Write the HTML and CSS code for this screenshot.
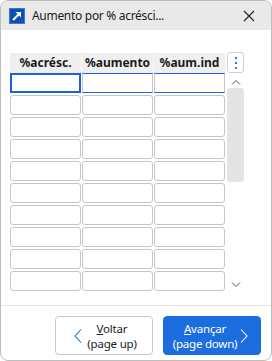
FILE: index.html
```html
<!DOCTYPE html>
<html lang="pt">

<head>
	<meta name="viewport" content="width=device-width, initial-scale=1">
	<title>Aumento por % acréscimo</title>
	<link rel="stylesheet" href="styles.css">
</head>

<body>
	<div class="window">
		<div class="titlebar">
			<svg class="app-icon" width="16" height="16" viewBox="0 0 16 16">
				<rect x="0.5" y="0.5" width="15" height="15" fill="#0f4fb0" stroke="#3b78d0" />
				<path d="M4 12 L11 5" stroke="#fff" stroke-width="2" />
				<path d="M6.5 4 L12 4 L12 9.5 Z" fill="#fff" />
			</svg>
			<span class="title">Aumento por % acrésci...</span>
			<svg class="close" width="12" height="12" viewBox="0 0 12 12">
				<path d="M1 1 L11 11 M11 1 L1 11" stroke="#222" stroke-width="1.1" />
			</svg>
		</div>

		<div class="content">
			<div class="grid-area">
				<div class="table">
					<div class="head">
						<div class="th">%acrésc.</div>
						<div class="th">%aumento</div>
						<div class="th">%aum.ind</div>
					</div>
					<div class="rows" id="rows"></div>
				</div>
				<div class="side">
					<div class="menu-btn">
						<span></span><span></span><span></span>
					</div>
					<svg class="arrow up" width="10" height="6" viewBox="0 0 10 6">
						<path d="M1 5.5 L5 1.5 L9 5.5" fill="none" stroke="#555" stroke-width="1" />
					</svg>
					<div class="thumb"></div>
					<div class="track-rest"></div>
					<svg class="arrow" width="10" height="6" viewBox="0 0 10 6">
						<path d="M1 0.5 L5 4.5 L9 0.5" fill="none" stroke="#555" stroke-width="1" />
					</svg>
				</div>
			</div>
		</div>

		<div class="footer">
			<button class="nav back">
				<svg width="8" height="14" viewBox="0 0 8 14">
					<path d="M7 0.5 L1 7 L7 13.5" fill="none" stroke="#1a6fdb" stroke-width="1.1" />
				</svg>
				<span class="label"><u>V</u>oltar<br>(page up)</span>
			</button>
			<button class="nav next">
				<span class="label"><u>A</u>vançar<br>(page down)</span>
				<svg width="8" height="14" viewBox="0 0 8 14">
					<path d="M1 0.5 L7 7 L1 13.5" fill="none" stroke="#fff" stroke-width="1.1" />
				</svg>
			</button>
		</div>
	</div>

	<script>
		const rows = document.getElementById('rows');
		for (let i = 0; i < 10; i++) {
			const row = document.createElement('div');
			row.className = i === 0 ? 'row selected' : 'row';
			for (let c = 0; c < 3; c++) {
				const cell = document.createElement('div');
				cell.className = (i === 0 && c === 0) ? 'cell focus' : 'cell';
				row.appendChild(cell);
			}
			rows.appendChild(row);
		}
	</script>
</body>

</html>
```

FILE: styles.css
```css
html,
body {
	margin: 0;
	padding: 0;
	background: #fff;
}

body {
	font-family: "Noto Sans", "Open Sans", sans-serif;
	font-size: 12px;
	color: #1b1b1b;
}

.window {
	box-sizing: border-box;
	width: 272px;
	height: 361px;
	border: 1px solid #bdbdbd;
	border-radius: 8px;
	overflow: hidden;
	display: flex;
	flex-direction: column;
	background: #fff;
}

.titlebar {
	height: 29px;
	flex: none;
	background: #e9e9e9;
	display: flex;
	align-items: center;
	padding: 0 0 0 8px;
}

.app-icon {
	flex: none;
	margin-top: 1px;
}

.title {
	margin-left: 7px;
	font-size: 12px;
	letter-spacing: -0.3px;
	flex: 1;
	white-space: nowrap;
}

.close {
	flex: none;
	margin-right: 16px;
}

.content {
	flex: 1;
	padding: 23px 0 0 9px;
}

.grid-area {
	display: flex;
	gap: 1px;
}

.table {
	width: 216px;
}

.head {
	display: grid;
	grid-template-columns: 72px 72px 72px;
	height: 20px;
	background: #efefef;
}

.th {
	font-weight: bold;
	font-size: 12px;
	text-align: center;
	line-height: 20px;
	border-right: 1px solid #f8f8f8;
}

.rows {
	display: flex;
	flex-direction: column;
	gap: 2px;
}

.row {
	display: grid;
	grid-template-columns: 71px 71px 71px;
	column-gap: 1px;
	height: 20px;
}

.cell {
	box-sizing: border-box;
	border: 1px solid #c6c6c6;
	border-radius: 3px;
	background: #fff;
}

.row.selected .cell {
	border-radius: 0;
	border-top-color: #1a62d6;
	border-bottom-color: #1a62d6;
}

.row.selected .cell.focus {
	border: 2px solid #1a62d6;
}

.side {
	width: 17px;
	display: flex;
	flex-direction: column;
	align-items: center;
}

.menu-btn {
	box-sizing: border-box;
	width: 17px;
	height: 21px;
	margin-top: -1px;
	border: 1px solid #cfcfcf;
	border-radius: 3px;
	display: flex;
	flex-direction: column;
	align-items: center;
	justify-content: center;
	gap: 3px;
}

.menu-btn span {
	width: 2px;
	height: 2px;
	background: #2f7be0;
}

.arrow {
	margin: 6px 0 3px;
}

.thumb {
	width: 17px;
	height: 94px;
	background: #e4e4e4;
	border-radius: 3px;
}

.track-rest {
	height: 94px;
}

.footer {
	box-sizing: border-box;
	flex: none;
	height: 55px;
	border-top: 1px solid #e3e3e3;
	display: flex;
	justify-content: flex-end;
	align-items: flex-start;
	gap: 10px;
	padding: 10px 10px 0 0;
}

.nav {
	box-sizing: border-box;
	width: 98px;
	height: 39px;
	border-radius: 4px;
	font-family: inherit;
	font-size: 11.5px;
	line-height: 15px;
	display: flex;
	align-items: center;
	padding: 0 10px 0 18px;
}

.nav .label {
	flex: 1;
	text-align: center;
	letter-spacing: -0.2px;
}

.back {
	background: #fff;
	border: 1px solid #c9c9c9;
	color: #1b1b1b;
}

.next {
	background: #1c6edf;
	border: 1px solid #1c6edf;
	color: #fff;
	padding: 0 12px 0 6px;
}
```
